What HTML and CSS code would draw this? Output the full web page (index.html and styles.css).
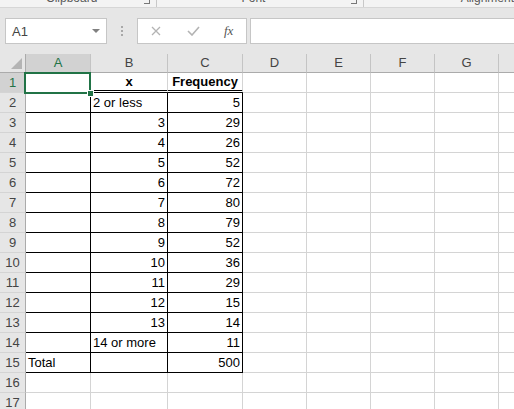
FILE: index.html
```html
<!DOCTYPE html>
<html>
<head>
<meta charset="utf-8">
<link rel="stylesheet" href="styles.css">
</head>
<body>
<div class="ribbon">
  <div class="grp g1"><span class="lbl">Clipboard</span><span class="launch"></span></div>
  <div class="grp g2"><span class="lbl">Font</span><span class="launch"></span></div>
  <div class="grp g3"><span class="lbl">Alignment</span></div>
</div>
<div class="fbar">
  <div class="namebox"><span>A1</span><span class="tri"></span></div>
  <div class="dots"><i></i><i></i><i></i></div>
  <div class="fbtns">
    <svg class="ic-x" width="10" height="10" viewBox="0 0 10 10"><path d="M1 1L9 9M9 1L1 9" stroke="#b3b3b3" stroke-width="1.3" fill="none"/></svg>
    <svg class="ic-ok" width="13" height="10" viewBox="0 0 13 10"><path d="M1 5L5 9L12 1" stroke="#b3b3b3" stroke-width="1.6" fill="none"/></svg>
    <span class="fx">fx</span>
  </div>
  <div class="finput"></div>
</div>
<div class="sheet">
  <div class="grid">
    <div class="hd corner"><span class="ctri"></span></div>
    <div class="hd col sel">A</div><div class="hd col">B</div><div class="hd col">C</div><div class="hd col">D</div><div class="hd col">E</div><div class="hd col">F</div><div class="hd col">G</div><div class="hd col"></div>

    <div class="rh rsel">1</div><div class="c a1"><span class="selbox"><span class="handle"></span></span></div><div class="c dbl h">x</div><div class="c dbl h">Frequency</div><div class="c"></div><div class="c"></div><div class="c"></div><div class="c"></div><div class="c"></div>

    <div class="rh">2</div><div class="c k"></div><div class="c k">2 or less</div><div class="c k r">5</div><div class="c"></div><div class="c"></div><div class="c"></div><div class="c"></div><div class="c"></div>
    <div class="rh">3</div><div class="c k"></div><div class="c k r">3</div><div class="c k r">29</div><div class="c"></div><div class="c"></div><div class="c"></div><div class="c"></div><div class="c"></div>
    <div class="rh">4</div><div class="c k"></div><div class="c k r">4</div><div class="c k r">26</div><div class="c"></div><div class="c"></div><div class="c"></div><div class="c"></div><div class="c"></div>
    <div class="rh">5</div><div class="c k"></div><div class="c k r">5</div><div class="c k r">52</div><div class="c"></div><div class="c"></div><div class="c"></div><div class="c"></div><div class="c"></div>
    <div class="rh">6</div><div class="c k"></div><div class="c k r">6</div><div class="c k r">72</div><div class="c"></div><div class="c"></div><div class="c"></div><div class="c"></div><div class="c"></div>
    <div class="rh">7</div><div class="c k"></div><div class="c k r">7</div><div class="c k r">80</div><div class="c"></div><div class="c"></div><div class="c"></div><div class="c"></div><div class="c"></div>
    <div class="rh">8</div><div class="c k"></div><div class="c k r">8</div><div class="c k r">79</div><div class="c"></div><div class="c"></div><div class="c"></div><div class="c"></div><div class="c"></div>
    <div class="rh">9</div><div class="c k"></div><div class="c k r">9</div><div class="c k r">52</div><div class="c"></div><div class="c"></div><div class="c"></div><div class="c"></div><div class="c"></div>
    <div class="rh">10</div><div class="c k"></div><div class="c k r">10</div><div class="c k r">36</div><div class="c"></div><div class="c"></div><div class="c"></div><div class="c"></div><div class="c"></div>
    <div class="rh">11</div><div class="c k"></div><div class="c k r">11</div><div class="c k r">29</div><div class="c"></div><div class="c"></div><div class="c"></div><div class="c"></div><div class="c"></div>
    <div class="rh">12</div><div class="c k"></div><div class="c k r">12</div><div class="c k r">15</div><div class="c"></div><div class="c"></div><div class="c"></div><div class="c"></div><div class="c"></div>
    <div class="rh">13</div><div class="c k"></div><div class="c k r">13</div><div class="c k r">14</div><div class="c"></div><div class="c"></div><div class="c"></div><div class="c"></div><div class="c"></div>
    <div class="rh">14</div><div class="c k"></div><div class="c k">14 or more</div><div class="c k r">11</div><div class="c"></div><div class="c"></div><div class="c"></div><div class="c"></div><div class="c"></div>
    <div class="rh">15</div><div class="c k">Total</div><div class="c k"></div><div class="c k r">500</div><div class="c"></div><div class="c"></div><div class="c"></div><div class="c"></div><div class="c"></div>
    <div class="rh">16</div><div class="c"></div><div class="c"></div><div class="c"></div><div class="c"></div><div class="c"></div><div class="c"></div><div class="c"></div><div class="c"></div>
    <div class="rh">17</div><div class="c"></div><div class="c"></div><div class="c"></div><div class="c"></div><div class="c"></div><div class="c"></div><div class="c"></div><div class="c"></div>
  </div>
</div>
</body>
</html>
```
FILE: styles.css
```css
html, body {
  margin: 0;
  padding: 0;
}
body {
  width: 514px;
  height: 409px;
  overflow: hidden;
  background: #ffffff;
  font-family: "Liberation Sans", Arial, sans-serif;
}

/* ribbon remnant */
.ribbon {
  height: 7px;
  background: #f3f3f3;
  border-bottom: 1px solid #d6d6d6;
  display: flex;
  overflow: hidden;
}
.grp {
  position: relative;
  height: 7px;
  border-right: 1px solid #c8c8c8;
  box-sizing: border-box;
}
.g1 { width: 158px; }
.g2 { width: 207px; }
.g3 { flex: 1; border-right: none; }
.lbl {
  display: block;
  font-size: 12px;
  line-height: 12px;
  color: #5a5a5a;
  margin-top: -8px;
  white-space: nowrap;
}
.g1 .lbl { padding-left: 46px; }
.g2 .lbl { padding-left: 84px; }
.g3 .lbl { padding-left: 97px; }
.launch {
  position: absolute;
  right: 6px;
  top: 0;
  width: 5px;
  height: 3px;
  border-right: 1px solid #777;
  border-bottom: 1px solid #777;
}

/* formula bar */
.fbar {
  height: 46px;
  background: #e6e6e6;
  display: flex;
  align-items: center;
  padding-left: 5px;
}
.namebox {
  width: 102px;
  height: 26px;
  box-sizing: border-box;
  background: #fff;
  border: 1px solid #c6c6c6;
  display: flex;
  align-items: center;
  justify-content: space-between;
  padding: 0 6px 0 6px;
  font-size: 13px;
  color: #444;
}
.tri {
  width: 0;
  height: 0;
  border-left: 4px solid transparent;
  border-right: 4px solid transparent;
  border-top: 4px solid #808080;
}
.dots {
  width: 30px;
  display: flex;
  flex-direction: column;
  align-items: center;
  gap: 2px;
}
.dots i {
  display: block;
  width: 2px;
  height: 2px;
  background: #a8a8a8;
}
.fbtns {
  width: 110px;
  height: 26px;
  box-sizing: border-box;
  background: #fff;
  border: 1px solid #c6c6c6;
  display: flex;
  align-items: center;
  padding-left: 13px;
}
.ic-x { margin-right: 26px; }
.ic-ok { margin-right: 24px; }
.fx {
  font-family: "Liberation Serif", serif;
  font-style: italic;
  font-size: 13px;
  color: #555;
}
.finput {
  margin-left: 3px;
  flex: 1;
  height: 26px;
  box-sizing: border-box;
  background: #fff;
  border: 1px solid #c6c6c6;
  border-right: none;
}

/* sheet */
.sheet {
  overflow: hidden;
  width: 514px;
}
.grid {
  display: grid;
  grid-template-columns: 26px 65px 77px 75px 64px 64px 64px 64px 64px;
  grid-template-rows: 19px;
  grid-auto-rows: 20px;
  width: 563px;
  font-size: 13px;
}
.hd {
  background: #e6e6e6;
  border-bottom: 1px solid #ababab;
  box-sizing: border-box;
  color: #444;
  text-align: center;
  line-height: 18px;
  font-size: 13px;
}
.col {
  border-right: 1px solid #c4c4c4;
}
.col.sel {
  background: #d2d2d2;
  color: #217346;
}
.corner {
  position: relative;
  border-right: 1px solid #ababab;
}
.ctri {
  position: absolute;
  right: 3px;
  bottom: 3px;
  width: 0;
  height: 0;
  border-left: 11px solid transparent;
  border-bottom: 11px solid #b4b4b4;
}
.rh {
  background: #e6e6e6;
  border-right: 1px solid #ababab;
  border-bottom: 1px solid #d4d4d4;
  box-sizing: border-box;
  color: #444;
  text-align: center;
  line-height: 19px;
  font-size: 13px;
}
.rh.rsel {
  background: #d2d2d2;
  color: #217346;
}
.c {
  position: relative;
  border-right: 1px solid #d4d4d4;
  border-bottom: 1px solid #d4d4d4;
  box-sizing: border-box;
  padding: 0 2px;
  line-height: 19px;
  color: #000;
  white-space: nowrap;
}
.c.k {
  border-right-color: #000;
  border-bottom-color: #000;
}
.c.r { text-align: right; }
.c.h {
  text-align: center;
  font-weight: bold;
}
.c.dbl {
  border-bottom: 3px double #000;
  line-height: 17px;
}
.selbox {
  position: absolute;
  left: -2px;
  top: -1px;
  right: -1px;
  bottom: -2px;
  border: 2px solid #217346;
  z-index: 2;
}
.handle {
  position: absolute;
  right: -5px;
  bottom: -5px;
  width: 5px;
  height: 5px;
  background: #217346;
  border: 1px solid #fff;
}
```
